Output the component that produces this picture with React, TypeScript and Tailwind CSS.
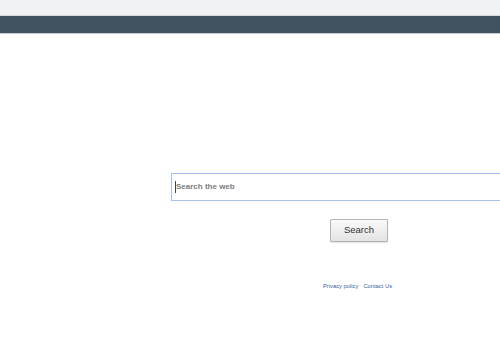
export default function App() {
  return (
    <div className="w-[500px] h-[350px] overflow-hidden bg-white" style={{ fontFamily: '"Liberation Sans", Arial, sans-serif' }}>
      <div className="h-[16px] bg-[#f1f2f4] border-b border-[#d6d8da]" />
      <div className="h-[18px] bg-[#415361] border-b border-[#c3ccd3]" />

      <div className="pt-[139px] pl-[171px]">
        <div className="w-[376px] flex flex-col items-center">
          <div className="w-full h-[28px] border border-[#a9c0ec] flex items-center pl-[3px]">
            <span className="w-px h-[12px] bg-[#444]" />
            <span className="text-[8px] font-bold text-[#7d7d7d]">Search the web</span>
          </div>

          <button className="mt-[18px] w-[58px] h-[23px] border border-[#b4b4b4] rounded-[1px] bg-gradient-to-b from-[#fafafa] to-[#e3e3e3] shadow-[0_1px_1px_rgba(0,0,0,0.12)] text-[9.5px] text-[#333] flex items-center justify-center">
            Search
          </button>

          <div className="mt-[40px] mr-[3px] flex gap-[5px] text-[5.8px] text-[#3b5d9e]">
            <a href="#">Privacy policy</a>
            <a href="#">Contact Us</a>
          </div>
        </div>
      </div>
    </div>
  )
}
